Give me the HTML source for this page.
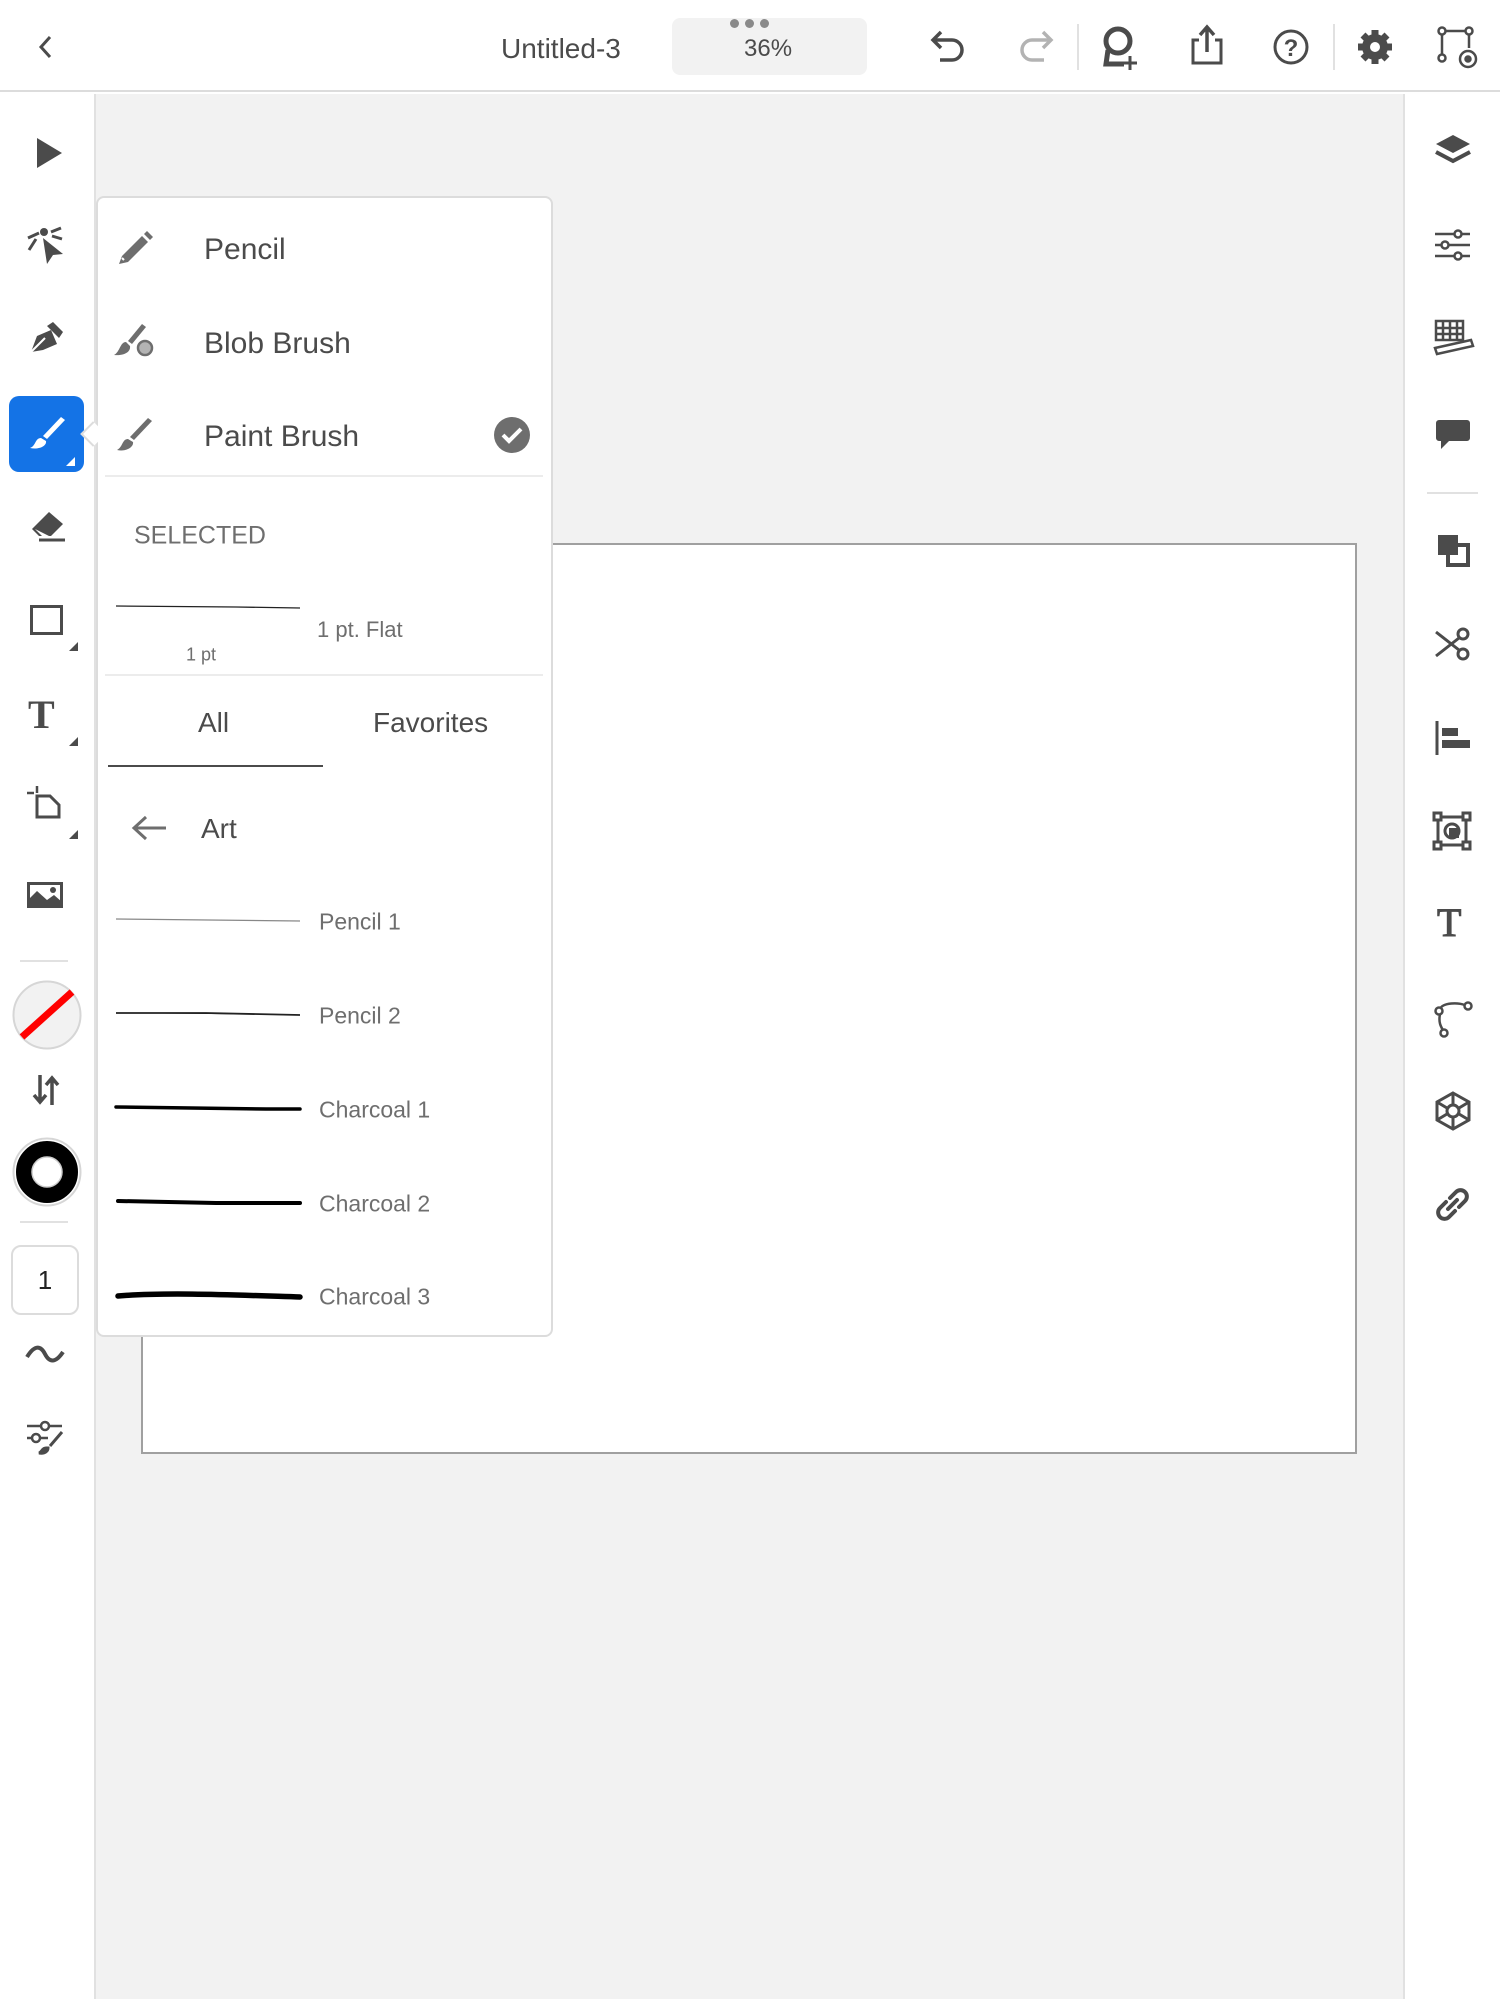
<!DOCTYPE html>
<html><head><meta charset="utf-8"><style>
*{margin:0;padding:0;box-sizing:border-box}
body{width:1500px;height:1999px;position:relative;background:#fff;font-family:"Liberation Sans","DejaVu Sans",sans-serif;overflow:hidden;color:#4b4b4b}
.a{position:absolute}
svg.i{position:absolute;overflow:visible}
.t{position:absolute;white-space:nowrap;transform:translateY(-50%)}
</style></head><body>
<!-- top bar -->
<div class="a" style="left:0;top:0;width:1500px;height:92px;background:#fff;border-bottom:2px solid #dcdcdc"></div>
<svg class="i" style="left:36px;top:34px" width="24" height="26"><path d="M14 3 L5 13 L14 23" fill="none" stroke="#4b4b4b" stroke-width="3"/></svg>
<div class="t" style="left:501px;top:49px;font-size:28px;color:#4b4b4b">Untitled-3</div>
<div class="a" style="left:672px;top:18px;width:195px;height:57px;background:#f2f2f2;border-radius:8px"></div>
<div class="a" style="left:730px;top:19px;width:9px;height:9px;border-radius:50%;background:#8a8a8a"></div>
<div class="a" style="left:745px;top:19px;width:9px;height:9px;border-radius:50%;background:#8a8a8a"></div>
<div class="a" style="left:760px;top:19px;width:9px;height:9px;border-radius:50%;background:#8a8a8a"></div>
<div class="t" style="left:744px;top:49px;font-size:24px;color:#4b4b4b">36%</div>
<svg class="i" style="left:930px;top:30px" width="40" height="36"><path d="M3 10 H22 a10 10 0 0 1 0 20 H10" fill="none" stroke="#4b4b4b" stroke-width="3.5"/><path d="M11 2 L3 10 L11 18" fill="none" stroke="#4b4b4b" stroke-width="3.5"/></svg>
<svg class="i" style="left:1015px;top:30px" width="40" height="36"><path d="M36 10 H17 a10 10 0 0 0 0 20 H29" fill="none" stroke="#b3b3b3" stroke-width="3.5"/><path d="M28 2 L36 10 L28 18" fill="none" stroke="#b3b3b3" stroke-width="3.5"/></svg>
<div class="a" style="left:1077px;top:24px;width:2px;height:46px;background:#e1e1e1"></div>
<svg class="i" style="left:1100px;top:26px" width="44" height="44"><circle cx="18" cy="15" r="12" fill="none" stroke="#4b4b4b" stroke-width="5"/><path d="M8 24 L6 38 H24" fill="none" stroke="#4b4b4b" stroke-width="5"/><path d="M30 30 V44 M23 37 H37" stroke="#4b4b4b" stroke-width="3"/></svg>
<svg class="i" style="left:1190px;top:24px" width="34" height="42"><path d="M9 16 H3 V39 H31 V16 H25" fill="none" stroke="#4b4b4b" stroke-width="3"/><path d="M17 28 V4 M10 11 L17 3 L24 11" fill="none" stroke="#4b4b4b" stroke-width="3.5"/></svg>
<svg class="i" style="left:1272px;top:28px" width="40" height="40"><circle cx="19" cy="19" r="16" fill="none" stroke="#4b4b4b" stroke-width="3"/><text x="19" y="28" text-anchor="middle" font-size="24" font-weight="bold" fill="#4b4b4b" font-family="Liberation Sans">?</text></svg>
<div class="a" style="left:1333px;top:24px;width:2px;height:46px;background:#e1e1e1"></div>
<svg class="i" style="left:1356px;top:28px" width="40" height="40"><g fill="#4b4b4b"><circle cx="19" cy="19" r="13"/><g stroke="#4b4b4b" stroke-width="7"><path d="M19 2 V36 M2 19 H36 M7 7 L31 31 M31 7 L7 31"/></g></g><circle cx="19" cy="19" r="5" fill="#fff"/></svg>
<svg class="i" style="left:1437px;top:26px" width="42" height="44"><g fill="none" stroke="#4b4b4b" stroke-width="2.5"><circle cx="5" cy="5" r="3.5"/><circle cx="32" cy="5" r="3.5"/><circle cx="5" cy="32" r="3.5"/><path d="M9 5 H28 M5 9 V28 M32 9 V22"/><circle cx="31" cy="33" r="8"/><circle cx="31" cy="33" r="2.5" fill="#4b4b4b"/></g></svg>

<!-- canvas -->
<div class="a" style="left:94px;top:94px;width:1311px;height:1905px;background:#f2f2f2;border-left:2px solid #e1e1e1;border-right:2px solid #e1e1e1"></div>
<div class="a" style="left:141px;top:543px;width:1216px;height:911px;background:#fff;border:2px solid #a0a0a0"></div>

<!-- left toolbar icons -->
<svg class="i" style="left:34px;top:136px" width="30" height="34"><path d="M3 2 L28 17 L3 32Z" fill="#4b4b4b"/></svg>
<svg class="i" style="left:25px;top:224px" width="44" height="44"><g fill="#4b4b4b"><path d="M18 14 L38 30 L28 31 L22 40Z"/><circle cx="19" cy="8" r="4"/></g><g stroke="#4b4b4b" stroke-width="3" fill="none"><path d="M3 14 L14 9 M4 26 L11 15 M26 8 L36 4 M27 12 L37 15"/></g></svg>
<svg class="i" style="left:27px;top:320px" width="40" height="40"><path d="M4 32 L10 16 L24 10 L30 24 L16 30Z M20 6 L26 2 L36 12 L32 18Z" fill="#4b4b4b"/><path d="M4 32 L18 18" stroke="#fff" stroke-width="2"/></svg>
<div class="a" style="left:9px;top:396px;width:75px;height:76px;background:#1473e6;border-radius:10px"></div>
<svg class="i" style="left:27px;top:414px" width="40" height="40"><path d="M34 3 L38 6 L20 25 L16 22Z" fill="#fff"/><path d="M14 24 C8 24 9 32 3 34 C12 36 20 32 19 27Z" fill="#fff"/></svg>
<div class="a" style="left:66px;top:457px;width:0;height:0;border-left:9px solid transparent;border-bottom:9px solid #fff"></div>
<svg class="i" style="left:29px;top:507px" width="40" height="36"><path d="M3 22 L20 5 L34 17 L22 29 H10Z" fill="#4b4b4b"/><path d="M6 22 L13 29 H20" fill="#fff" stroke="none"/><path d="M10 33 H36" stroke="#4b4b4b" stroke-width="3"/></svg>
<div class="a" style="left:30px;top:605px;width:33px;height:30px;border:3.5px solid #4b4b4b"></div>
<div class="a" style="left:69px;top:642px;width:0;height:0;border-left:9px solid transparent;border-bottom:9px solid #4b4b4b"></div>
<div class="a" style="left:28px;top:697px;font-family:'Liberation Serif',serif;font-weight:bold;font-size:40px;line-height:36px;color:#4b4b4b">T</div>
<div class="a" style="left:69px;top:737px;width:0;height:0;border-left:9px solid transparent;border-bottom:9px solid #4b4b4b"></div>
<svg class="i" style="left:25px;top:786px" width="40" height="40"><path d="M12 10 H25 L34 19 V31 H12Z" fill="none" stroke="#4b4b4b" stroke-width="3"/><path d="M2 7 H9 M12 0 V7" stroke="#4b4b4b" stroke-width="2.5"/></svg>
<div class="a" style="left:69px;top:830px;width:0;height:0;border-left:9px solid transparent;border-bottom:9px solid #4b4b4b"></div>
<svg class="i" style="left:27px;top:882px" width="40" height="36"><rect x="1.5" y="1.5" width="33" height="23" fill="#fff" stroke="#4b4b4b" stroke-width="3"/><path d="M1 26 L1 18 L10 9 L20 18 L27 13 L35 20 V26Z" fill="#4b4b4b"/><circle cx="26" cy="8" r="3" fill="#4b4b4b"/></svg>
<div class="a" style="left:20px;top:960px;width:48px;height:2px;background:#e1e1e1"></div>
<svg class="i" style="left:12px;top:980px" width="70" height="70"><circle cx="35" cy="35" r="33.5" fill="#f2f2f2" stroke="#d6d6d6" stroke-width="2"/><path d="M10 57 L60 12" stroke="#ff0000" stroke-width="7"/></svg>
<svg class="i" style="left:32px;top:1073px" width="30" height="34"><path d="M8 2 V28 M2 22 L8 29 L14 22 M20 32 V6 M14 12 L20 5 L26 12" fill="none" stroke="#4b4b4b" stroke-width="3.5"/></svg>
<svg class="i" style="left:12px;top:1137px" width="70" height="70"><circle cx="35" cy="35" r="33.5" fill="#fff" stroke="#d6d6d6" stroke-width="2"/><circle cx="35" cy="35" r="23" fill="none" stroke="#000" stroke-width="16"/><circle cx="35" cy="35" r="15" fill="none" stroke="#ccc" stroke-width="1.5"/></svg>
<div class="a" style="left:20px;top:1221px;width:48px;height:2px;background:#e1e1e1"></div>
<div class="a" style="left:11px;top:1245px;width:68px;height:70px;border:2px solid #dcdcdc;border-radius:10px;text-align:center;line-height:66px;font-size:26px;color:#222">1</div>
<svg class="i" style="left:25px;top:1342px" width="40" height="26"><path d="M2 15 C10 2 16 4 20 12 C24 20 30 22 38 10" fill="none" stroke="#4b4b4b" stroke-width="4"/></svg>
<svg class="i" style="left:26px;top:1418px" width="40" height="36"><g fill="none" stroke="#4b4b4b" stroke-width="2.5"><path d="M1 8 H36 M1 20 H22"/><circle cx="19" cy="8" r="4" fill="#fff"/><circle cx="10" cy="20" r="4" fill="#fff"/></g><path d="M36 14 L24 28 M20 30 C16 30 16 34 13 35 C19 36 22 33 22 30Z" stroke="#4b4b4b" stroke-width="3" fill="#4b4b4b"/></svg>

<!-- right toolbar icons -->
<svg class="i" style="left:1434px;top:133px" width="38" height="38"><path d="M19 2 L36 11 L19 20 L2 11Z" fill="#4b4b4b"/><path d="M2 19 L19 28 L36 19" fill="none" stroke="#4b4b4b" stroke-width="4"/></svg>
<svg class="i" style="left:1434px;top:229px" width="38" height="34"><g fill="none" stroke="#4b4b4b" stroke-width="2.5"><path d="M1 5 H36 M1 16 H36 M1 27 H36"/><circle cx="24" cy="5" r="3.5" fill="#fff"/><circle cx="11" cy="16" r="3.5" fill="#fff"/><circle cx="24" cy="27" r="3.5" fill="#fff"/></g></svg>
<svg class="i" style="left:1433px;top:318px" width="42" height="42"><g fill="none" stroke="#4b4b4b" stroke-width="2.5"><path d="M3 3 H30 V22 H3Z M10 3 V22 M17 3 V22 M24 3 V22 M3 10 H30 M3 16 H30"/><path d="M2 30 L38 22 L40 28 L4 36Z"/></g></svg>
<svg class="i" style="left:1435px;top:418px" width="36" height="34"><path d="M4 2 H32 a3 3 0 0 1 3 3 V20 a3 3 0 0 1-3 3 H14 L6 31 V23 H4 a3 3 0 0 1-3-3 V5 a3 3 0 0 1 3-3Z" fill="#4b4b4b"/></svg>
<div class="a" style="left:1427px;top:492px;width:51px;height:2px;background:#e1e1e1"></div>
<svg class="i" style="left:1436px;top:533px" width="36" height="36"><rect x="2" y="2" width="20" height="20" fill="#4b4b4b"/><rect x="12" y="12" width="20" height="20" fill="#fff" stroke="#4b4b4b" stroke-width="4"/><rect x="12" y="12" width="10" height="10" fill="#4b4b4b"/></svg>
<svg class="i" style="left:1434px;top:626px" width="40" height="36"><g fill="none" stroke="#4b4b4b" stroke-width="3"><circle cx="29" cy="8" r="5"/><circle cx="29" cy="28" r="5"/><path d="M2 6 L25 24 M2 30 L25 12"/></g></svg>
<svg class="i" style="left:1435px;top:720px" width="38" height="36"><path d="M2 1 V35" stroke="#4b4b4b" stroke-width="3"/><rect x="7" y="8" width="16" height="8" fill="#4b4b4b"/><rect x="7" y="20" width="28" height="8" fill="#4b4b4b"/></svg>
<svg class="i" style="left:1433px;top:812px" width="40" height="40"><g fill="none" stroke="#4b4b4b" stroke-width="3"><rect x="5" y="5" width="28" height="28"/><rect x="1" y="1" width="7" height="7" fill="#fff"/><rect x="30" y="1" width="7" height="7" fill="#fff"/><rect x="1" y="30" width="7" height="7" fill="#fff"/><rect x="30" y="30" width="7" height="7" fill="#fff"/><circle cx="19" cy="19" r="7"/></g><rect x="16" y="16" width="10" height="10" fill="#4b4b4b"/></svg>
<div class="a" style="left:1437px;top:903px;font-family:'Liberation Serif',serif;font-size:40px;line-height:40px;color:#4b4b4b;-webkit-text-stroke:1px #4b4b4b">T</div>
<svg class="i" style="left:1434px;top:998px" width="40" height="40"><g fill="none" stroke="#4b4b4b" stroke-width="2.5"><path d="M6 12 C6 4 28 4 32 8 M6 16 C4 26 8 30 10 34"/><circle cx="5" cy="13" r="3.5" fill="#fff"/><circle cx="34" cy="8" r="3.5" fill="#fff"/><circle cx="10" cy="35" r="3.5" fill="#fff"/></g></svg>
<svg class="i" style="left:1433px;top:1091px" width="40" height="40"><g fill="none" stroke="#4b4b4b" stroke-width="3"><path d="M20 2 L36 11 V29 L20 38 L4 29 V11Z"/><circle cx="20" cy="20" r="6"/><path d="M20 2 V14 M20 26 V38 M4 11 L14 17 M26 23 L36 29 M36 11 L26 17 M14 23 L4 29"/></g></svg>
<svg class="i" style="left:1434px;top:1186px" width="38" height="38"><g fill="none" stroke="#4b4b4b" stroke-width="4" stroke-linecap="round"><path d="M16 12 L22 6 a6 6 0 0 1 9 9 L25 21"/><path d="M21 25 L15 31 a6 6 0 0 1-9-9 L12 16"/><path d="M14 23 L23 14"/></g></svg>

<!-- popup -->
<div class="a" style="left:96px;top:196px;width:457px;height:1141px;background:#fff;border:2px solid #dcdcdc;border-radius:8px"></div>
<div class="a" style="left:84px;top:425px;width:18px;height:18px;background:#fff;border-left:2px solid #dcdcdc;border-bottom:2px solid #dcdcdc;transform:rotate(45deg)"></div>

<svg class="i" style="left:116px;top:230px" width="40" height="36"><path d="M6 26 L26 6 L32 12 L12 32 L3 34Z" fill="#6e6e6e"/><path d="M28 4 L31 1 L37 7 L34 10Z" fill="#6e6e6e"/><path d="M6 28 L8 30" stroke="#fff" stroke-width="2"/></svg>
<div class="t" style="left:204px;top:250px;font-size:30px">Pencil</div>
<svg class="i" style="left:112px;top:322px" width="44" height="40"><path d="M30 2 L34 5 L20 22 L16 19Z" fill="#6e6e6e"/><path d="M14 20 C8 20 8 30 2 33 C12 34 19 30 18 24Z" fill="#6e6e6e"/><circle cx="33" cy="26" r="7" fill="#b3b3b3" stroke="#6e6e6e" stroke-width="2.5"/></svg>
<div class="t" style="left:204px;top:344px;font-size:30px">Blob Brush</div>
<svg class="i" style="left:114px;top:416px" width="40" height="40"><path d="M34 2 L38 5 L20 24 L16 21Z" fill="#6e6e6e"/><path d="M14 23 C8 23 9 31 3 34 C12 36 20 31 19 26Z" fill="#6e6e6e"/></svg>
<div class="t" style="left:204px;top:437px;font-size:30px">Paint Brush</div>
<div class="a" style="left:494px;top:417px;width:36px;height:36px;border-radius:50%;background:#6e6e6e"></div>
<svg class="i" style="left:494px;top:417px" width="36" height="36"><path d="M9 18 L15 24 L27 12" fill="none" stroke="#fff" stroke-width="4"/></svg>
<div class="a" style="left:105px;top:475px;width:438px;height:2px;background:#ececec"></div>
<div class="t" style="left:134px;top:536px;font-size:25px;color:#6e6e6e">SELECTED</div>
<svg class="i" style="left:116px;top:603px" width="186" height="8"><path d="M0 3 L120 4 L184 5" stroke="#222" stroke-width="1.3" fill="none"/></svg>
<div class="t" style="left:186px;top:655px;font-size:18px;color:#6e6e6e">1 pt</div>
<div class="t" style="left:317px;top:630px;font-size:22px;color:#6e6e6e">1 pt. Flat</div>
<div class="a" style="left:105px;top:674px;width:438px;height:2px;background:#ececec"></div>
<div class="t" style="left:198px;top:723px;font-size:28px">All</div>
<div class="t" style="left:373px;top:723px;font-size:28px">Favorites</div>
<div class="a" style="left:108px;top:765px;width:215px;height:2px;background:#4b4b4b"></div>
<svg class="i" style="left:130px;top:814px" width="40" height="28"><path d="M36 14 H4 M16 3 L4 14 L16 25" fill="none" stroke="#6e6e6e" stroke-width="3"/></svg>
<div class="t" style="left:201px;top:829px;font-size:28px">Art</div>

<svg class="i" style="left:116px;top:916px" width="186" height="8"><path d="M0 3 L184 5" stroke="#888" stroke-width="1.2"/></svg>
<div class="t" style="left:319px;top:922px;font-size:23px;color:#6e6e6e">Pencil 1</div>
<svg class="i" style="left:116px;top:1010px" width="186" height="8"><path d="M0 3 L90 3 L184 5" stroke="#222" stroke-width="1.8"/></svg>
<div class="t" style="left:319px;top:1016px;font-size:23px;color:#6e6e6e">Pencil 2</div>
<svg class="i" style="left:116px;top:1103px" width="186" height="10"><path d="M0 4 L150 6 L184 6" stroke="#000" stroke-width="3.5" stroke-linecap="round"/></svg>
<div class="t" style="left:319px;top:1110px;font-size:23px;color:#6e6e6e">Charcoal 1</div>
<svg class="i" style="left:116px;top:1197px" width="186" height="10"><path d="M2 4 L100 6 L184 6" stroke="#000" stroke-width="4" stroke-linecap="round"/></svg>
<div class="t" style="left:319px;top:1204px;font-size:23px;color:#6e6e6e">Charcoal 2</div>
<svg class="i" style="left:116px;top:1290px" width="186" height="12"><path d="M2 6 C50 2 120 5 184 7" stroke="#000" stroke-width="5.5" stroke-linecap="round" fill="none"/></svg>
<div class="t" style="left:319px;top:1297px;font-size:23px;color:#6e6e6e">Charcoal 3</div>
</body></html>
